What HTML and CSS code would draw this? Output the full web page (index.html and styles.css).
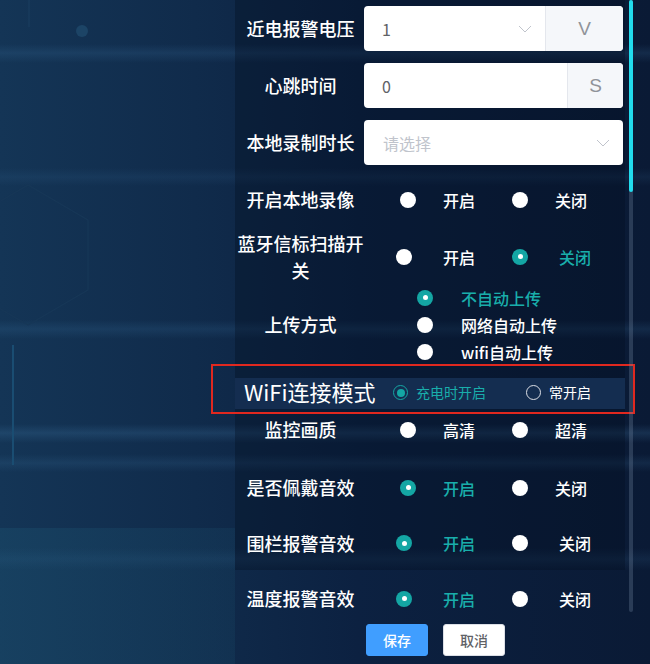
FILE: index.html
```html
<!DOCTYPE html>
<html lang="zh-CN">
<head>
    <meta charset="UTF-8">
    <meta name="viewport" content="width=device-width, initial-scale=1.0">
    <title>设备参数设置</title>
    <link rel="stylesheet" href="styles.css">
</head>
<body>
    <div class="screen">
        <!-- 左侧装饰背景 -->
        <div class="deco">
            <svg class="deco-art" width="235" height="528" viewBox="0 0 235 528">
                <line x1="29" y1="0" x2="29" y2="27" stroke="#193b5c" stroke-width="1.5"/>
                <circle cx="82" cy="31" r="6" fill="#1c4466"/>
                <polyline points="-32,220 28,185 88,220 88,290 28,325 -32,290" fill="none" stroke="#173757" stroke-width="1.2"/>
                <line x1="13" y1="345" x2="13" y2="465" stroke="#1a4d72" stroke-width="2"/>
            </svg>
            <div class="deco-foot"></div>
        </div>

        <form class="form">
            <div class="panel">
                <div class="row">
                    <label class="lbl">近电报警电压</label>
                    <div class="field">
                        <div class="input">
                            <span class="val">1</span>
                            <svg class="arrow" width="14" height="8" viewBox="0 0 14 8"><polyline points="1,1 7,7 13,1" fill="none" stroke="#c0c4cc" stroke-width="1"/></svg>
                        </div>
                        <span class="append append-v">V</span>
                    </div>
                </div>
                <div class="row">
                    <label class="lbl">心跳时间</label>
                    <div class="field">
                        <div class="input">
                            <span class="val">0</span>
                        </div>
                        <span class="append append-s">S</span>
                    </div>
                </div>
                <div class="row">
                    <label class="lbl">本地录制时长</label>
                    <div class="field">
                        <div class="input">
                            <span class="val placeholder">请选择</span>
                            <svg class="arrow" width="14" height="8" viewBox="0 0 14 8"><polyline points="1,1 7,7 13,1" fill="none" stroke="#c0c4cc" stroke-width="1"/></svg>
                        </div>
                    </div>
                </div>
                <div class="row">
                    <label class="lbl">开启本地录像</label>
                    <div class="opts">
                        <span class="opt"><i class="dot"></i>开启</span>
                        <span class="opt"><i class="dot"></i>关闭</span>
                    </div>
                </div>
                <div class="row">
                    <label class="lbl">蓝牙信标扫描开关</label>
                    <div class="opts alt">
                        <span class="opt"><i class="dot"></i>开启</span>
                        <span class="opt on"><i class="dot"></i>关闭</span>
                    </div>
                </div>
                <div class="row tall">
                    <label class="lbl">上传方式</label>
                    <div class="opts col">
                        <span class="opt on"><i class="dot"></i>不自动上传</span>
                        <span class="opt"><i class="dot"></i>网络自动上传</span>
                        <span class="opt"><i class="dot"></i>wifi自动上传</span>
                    </div>
                </div>

                <!-- 标注框 -->
                <div class="mark">
                    <div class="wifi">
                        <span class="wifi-lbl">WiFi连接模式</span>
                        <span class="ropt ropt-first on"><i class="ring"></i>充电时开启</span>
                        <span class="ropt"><i class="ring"></i>常开启</span>
                    </div>
                </div>

                <div class="row short">
                    <label class="lbl">监控画质</label>
                    <div class="opts">
                        <span class="opt"><i class="dot"></i>高清</span>
                        <span class="opt"><i class="dot"></i>超清</span>
                    </div>
                </div>
                <div class="row">
                    <label class="lbl">是否佩戴音效</label>
                    <div class="opts">
                        <span class="opt on"><i class="dot"></i>开启</span>
                        <span class="opt"><i class="dot"></i>关闭</span>
                    </div>
                </div>
                <div class="row mid">
                    <label class="lbl">围栏报警音效</label>
                    <div class="opts alt">
                        <span class="opt on"><i class="dot"></i>开启</span>
                        <span class="opt"><i class="dot"></i>关闭</span>
                    </div>
                </div>
            </div>
            <div class="row last">
                <label class="lbl">温度报警音效</label>
                <div class="opts alt">
                    <span class="opt on"><i class="dot"></i>开启</span>
                    <span class="opt"><i class="dot"></i>关闭</span>
                </div>
            </div>
            <div class="actions">
                <button type="button" class="btn btn-primary">保存</button>
                <button type="button" class="btn">取消</button>
            </div>
        </form>

        <div class="scroll">
            <div class="track"><div class="thumb"></div></div>
        </div>
    </div>
</body>
</html>
```

FILE: styles.css
```css
*{
    box-sizing: border-box;
}
body{
    margin: 0;
    width: 650px;
    height: 664px;
    overflow: hidden;
    font-family: "Noto Sans CJK SC", "Noto Sans", sans-serif;
    color: #fff;
    background:
        linear-gradient(180deg,
            transparent 0, transparent 44px, rgba(70,130,180,0.16) 53px, transparent 63px,
            transparent 168px, rgba(70,130,180,0.1) 177px, transparent 186px,
            transparent 320px, rgba(70,135,185,0.14) 329px, transparent 339px,
            transparent 424px, rgba(80,145,195,0.18) 433px, transparent 443px,
            transparent 454px, rgba(80,145,195,0.12) 463px, transparent 472px,
            transparent 548px, rgba(80,145,195,0.1) 559px, transparent 570px),
        linear-gradient(90deg, #143556 0, #102b4b 30%, #0c2141 55%, #0a1a35 100%);
}
.screen{
    display: flex;
    height: 664px;
}

/* 左侧装饰 */
.deco{
    width: 235px;
    flex: none;
    display: flex;
    flex-direction: column;
}
.deco-art{
    display: block;
}
.deco-foot{
    flex: 1;
    background: linear-gradient(90deg, rgba(30,90,120,0.3), rgba(30,90,120,0.18));
}

/* 表单 */
.form{
    width: 390px;
    flex: none;
    margin: 0;
    display: flex;
    flex-direction: column;
}
.panel{
    background-color: rgba(4,14,32,0.35);
}
.row{
    display: flex;
    align-items: center;
    height: 57px;
}
.row.tall{
    height: 79px;
}
.row.short{
    height: 45px;
    align-items: flex-start;
    padding-top: 2px;
}
.row.mid{
    height: 54px;
}
.row.last{
    height: 54px;
    align-items: flex-start;
    padding-top: 15px;
}
.lbl{
    width: 129px;
    flex: none;
    padding-left: 2px;
    text-align: center;
    font-size: 18px;
    font-weight: 500;
    line-height: 27px;
    color: #fff;
}

/* 输入框 */
.field{
    width: 259px;
    height: 45px;
    display: flex;
    background-color: #fff;
    border-radius: 4px;
    overflow: hidden;
}
.input{
    flex: 1;
    display: flex;
    align-items: center;
    justify-content: space-between;
    padding: 0 13px 0 18px;
}
.val{
    font-size: 16px;
    color: #606266;
}
.val.placeholder{
    color: #c0c4cc;
    padding-left: 1px;
}
.arrow{
    display: block;
}
.append{
    display: flex;
    align-items: center;
    justify-content: center;
    background-color: #f5f7fa;
    border-left: 1px solid #e4e7ed;
    color: #909399;
    font-family: "Liberation Sans", sans-serif;
    font-size: 19px;
}
.append-v{
    width: 78px;
}
.append-s{
    width: 56px;
}

/* 单选 */
.opts{
    display: flex;
    padding-left: 36px;
}
.opt{
    display: flex;
    align-items: center;
    gap: 27px;
    height: 27px;
    font-size: 16px;
    font-weight: 500;
    color: #fff;
}
.opts .opt:first-child{
    width: 112px;
}
.opts.alt{
    padding-left: 32px;
}
.opts.alt .opt{
    gap: 31px;
}
.opts.alt .opt:first-child{
    width: 116px;
}
.opts.col{
    flex-direction: column;
    padding-left: 53px;
}
.opts.col .opt{
    gap: 28px;
    width: auto;
}
.dot{
    width: 16px;
    height: 16px;
    border-radius: 50%;
    background-color: #fff;
    display: flex;
    align-items: center;
    justify-content: center;
    flex: none;
}
.opt.on{
    color: #19aeab;
}
.opt.on .dot{
    background-color: #14a6a4;
}
.opt.on .dot::after{
    content: "";
    width: 5px;
    height: 5px;
    border-radius: 50%;
    background-color: #fff;
}

/* 标注行 */
.mark{
    margin: 0 -10px 0 -24px;
    padding: 12px 8px 3px 22px;
    border: 2px solid #e0281f;
}
.wifi{
    height: 31px;
    display: flex;
    align-items: center;
    padding: 0 0 4px 9px;
    background-color: #142d50;
}
.wifi-lbl{
    width: 149px;
    flex: none;
    font-size: 22px;
    line-height: 27px;
    color: #fff;
}
.ropt{
    display: flex;
    align-items: center;
    gap: 8px;
    font-size: 14px;
    color: #fff;
}
.ropt-first{
    width: 133px;
    flex: none;
}
.ring{
    width: 15px;
    height: 15px;
    margin-top: 2px;
    border-radius: 50%;
    border: 1px solid #dcdfe6;
    display: flex;
    align-items: center;
    justify-content: center;
}
.ropt.on{
    color: #19aeab;
}
.ropt.on .ring{
    border: 1.5px solid #14a6a4;
}
.ropt.on .ring::after{
    content: "";
    width: 8px;
    height: 8px;
    border-radius: 50%;
    background-color: #14a6a4;
}

/* 按钮 */
.actions{
    display: flex;
    gap: 15px;
    padding-left: 131px;
}
.btn{
    width: 62px;
    height: 32px;
    border-radius: 3px;
    border: 1px solid #dcdfe6;
    background-color: #fff;
    color: #606266;
    font-family: inherit;
    font-size: 14px;
    font-weight: 500;
    padding: 0;
}
.btn-primary{
    background-color: #409eff;
    border-color: #409eff;
    color: #fff;
}

/* 滚动条 */
.scroll{
    width: 25px;
    flex: none;
    padding-left: 4px;
}
.track{
    width: 4px;
    height: 612px;
    border-radius: 2px;
    background-color: rgba(120,140,165,0.3);
}
.thumb{
    height: 192px;
    border-radius: 2px;
    background-color: #22dcee;
}
```
